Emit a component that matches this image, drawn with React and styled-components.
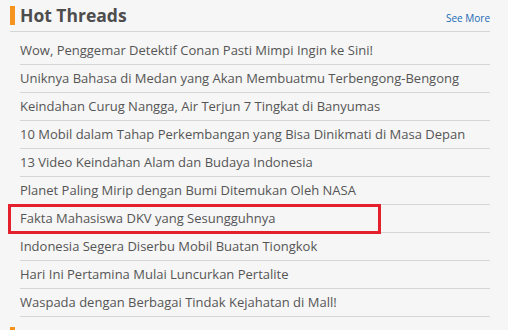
import styled, { createGlobalStyle } from 'styled-components';

const GlobalStyle = createGlobalStyle`
    body {
        margin: 0;
        background: #f6f6f6;
        font-family: "Open Sans", "Liberation Sans", sans-serif;
    }
`;

const Wrapper = styled.div`
    padding: 0 18px 0 10px;
`;
const Header = styled.div`
    display: flex;
    justify-content: space-between;
    align-items: center;
    height: 31px;
    border-bottom: 1px solid #d6d6d6;
`;
const Title = styled.h2`
    margin: 0;
    border-left: 5px solid #f7941d;
    padding-left: 5px;
    font-size: 17.5px;
    line-height: 19px;
    font-weight: 700;
    color: #4d4d4d;
`;
const SeeMore = styled.a`
    font-size: 10px;
    color: #1a6ab5;
    text-decoration: none;
    padding-top: 5px;
`;
const List = styled.ul`
    list-style: none;
    margin: 0;
    padding: 5px 0 0 10px;
`;
const Item = styled.li`
    position: relative;
    height: 27px;
    line-height: 27px;
    border-bottom: 1px solid #d6d6d6;
    font-size: 13px;
    color: #555;
    white-space: nowrap;
`;
const Highlight = styled.span`
    position: absolute;
    left: -12px;
    top: -1px;
    width: 373px;
    height: 30px;
    border: 3px solid #e3202b;
    box-sizing: border-box;
`;
const NextSection = styled.div`
    margin-top: 10px;
    height: 19px;
    border-left: 5px solid #f7941d;
`;

const threads = [
    'Wow, Penggemar Detektif Conan Pasti Mimpi Ingin ke Sini!',
    'Uniknya Bahasa di Medan yang Akan Membuatmu Terbengong-Bengong',
    'Keindahan Curug Nangga, Air Terjun 7 Tingkat di Banyumas',
    '10 Mobil dalam Tahap Perkembangan yang Bisa Dinikmati di Masa Depan',
    '13 Video Keindahan Alam dan Budaya Indonesia',
    'Planet Paling Mirip dengan Bumi Ditemukan Oleh NASA',
    'Fakta Mahasiswa DKV yang Sesungguhnya',
    'Indonesia Segera Diserbu Mobil Buatan Tiongkok',
    'Hari Ini Pertamina Mulai Luncurkan Pertalite',
    'Waspada dengan Berbagai Tindak Kejahatan di Mall!',
];

export default function App() {
    return (
        <>
            <GlobalStyle />
            <Wrapper>
                <Header>
                    <Title>Hot Threads</Title>
                    <SeeMore href="#">See More</SeeMore>
                </Header>
                <List>
                    {threads.map((t, i) => (
                        <Item key={i}>
                            {t}
                            {i === 6 && <Highlight />}
                        </Item>
                    ))}
                </List>
                <NextSection />
            </Wrapper>
        </>
    );
}
